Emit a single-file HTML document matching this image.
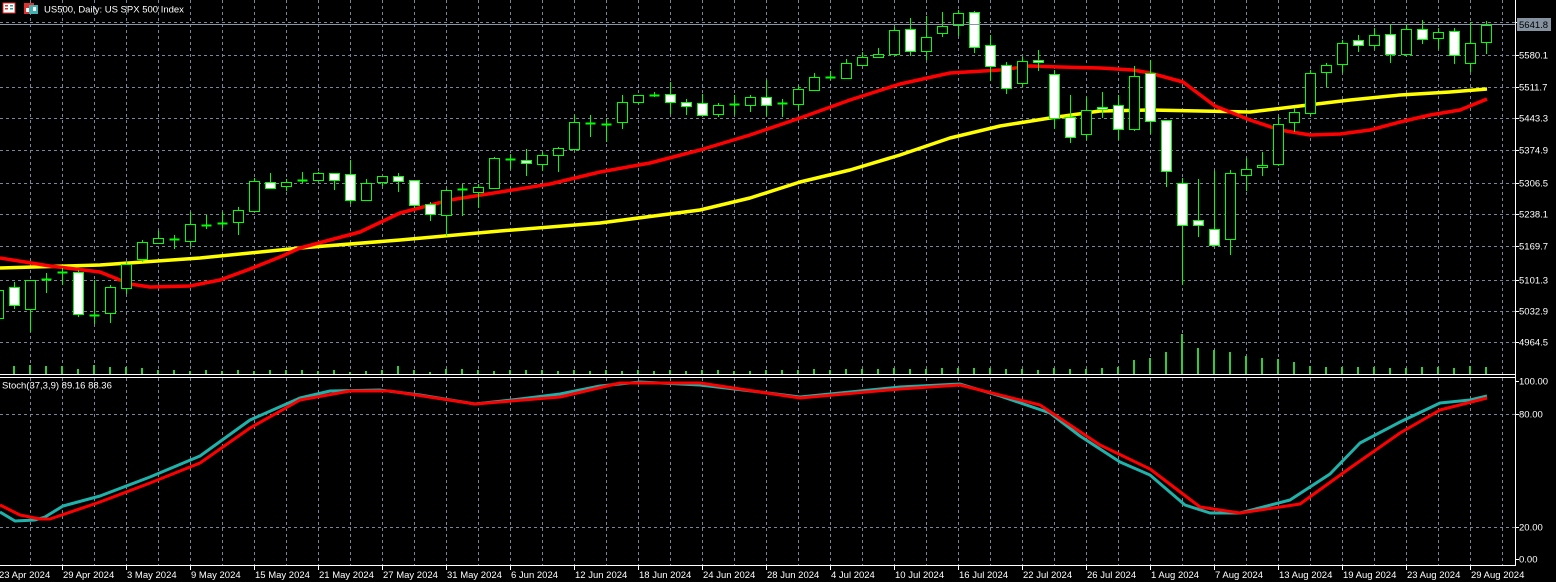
<!DOCTYPE html>
<html><head><meta charset="utf-8"><style>
html,body{margin:0;padding:0;background:#000;width:1556px;height:582px;overflow:hidden}
svg{display:block}
text{font-family:"Liberation Sans","DejaVu Sans",sans-serif;font-size:9.5px;fill:#fff}
</style></head><body>
<svg id="s" width="1556" height="582" viewBox="0 0 1556 582" xmlns="http://www.w3.org/2000/svg">
<rect width="1556" height="582" fill="#000"/>
<g id="grid"></g>
<g id="vol"></g>
<g id="ma"></g>
<g id="c"></g>
<g id="st"></g>
<!-- header -->
<rect x="3" y="3" width="12" height="10" fill="#fff" stroke="#e03030" stroke-width="1"/>
<rect x="5" y="5" width="3" height="1.5" fill="#e03030"/><rect x="5" y="8" width="3" height="1.5" fill="#e03030"/><rect x="10" y="5" width="3" height="1.5" fill="#30a0a0"/><rect x="10" y="8" width="3" height="1.5" fill="#30a0a0"/>
<rect x="24" y="3" width="10" height="11" fill="#e03030"/><rect x="29" y="5" width="9" height="9" fill="#40b0b0"/><rect x="26" y="8" width="3" height="4" fill="#fff"/><rect x="33" y="7" width="3" height="4" fill="#fff"/>
<text x="44" y="12.5" font-size="10">US500, Daily:  US SPX 500 Index</text>
<text x="2" y="388.5" font-size="9.5">Stoch(37,3,9) 89.16 88.36</text>
<!-- axes -->
<line x1="1515.5" y1="0" x2="1515.5" y2="566" stroke="#fff"/>
<line x1="0" y1="374.5" x2="1516" y2="374.5" stroke="#fff"/>
<line x1="0" y1="377.5" x2="1516" y2="377.5" stroke="#fff"/>
<line x1="0" y1="565.5" x2="1516" y2="565.5" stroke="#fff"/>
<line x1="0" y1="24.5" x2="1515" y2="24.5" stroke="#8a96a3"/>
<g id="ax"></g>
<rect x="1517" y="18" width="34" height="13" fill="#8592a0"/>
<text x="1519" y="28" style="fill:#000">5641.8</text>
<text x="1519" y="58.5">5580.1</text>
<text x="1519" y="90.5">5511.7</text>
<text x="1519" y="121.5">5443.3</text>
<text x="1519" y="153.5">5374.9</text>
<text x="1519" y="186.5">5306.5</text>
<text x="1519" y="217.5">5238.1</text>
<text x="1519" y="249.5">5169.7</text>
<text x="1519" y="283.5">5101.3</text>
<text x="1519" y="314.5">5032.9</text>
<text x="1519" y="345.5">4964.5</text>
<text x="1519" y="384.5">100.00</text>
<text x="1519" y="417.5">80.00</text>
<text x="1519" y="530.5">20.00</text>
<text x="1519" y="562.5">0.00</text>
<g>
<text x="-1" y="578">23 Apr 2024</text>
<text x="63" y="578">29 Apr 2024</text>
<text x="127" y="578">3 May 2024</text>
<text x="191" y="578">9 May 2024</text>
<text x="255" y="578">15 May 2024</text>
<text x="319" y="578">21 May 2024</text>
<text x="383" y="578">27 May 2024</text>
<text x="447" y="578">31 May 2024</text>
<text x="511" y="578">6 Jun 2024</text>
<text x="575" y="578">12 Jun 2024</text>
<text x="639" y="578">18 Jun 2024</text>
<text x="703" y="578">24 Jun 2024</text>
<text x="767" y="578">28 Jun 2024</text>
<text x="831" y="578">4 Jul 2024</text>
<text x="895" y="578">10 Jul 2024</text>
<text x="959" y="578">16 Jul 2024</text>
<text x="1023" y="578">22 Jul 2024</text>
<text x="1087" y="578">26 Jul 2024</text>
<text x="1151" y="578">1 Aug 2024</text>
<text x="1215" y="578">7 Aug 2024</text>
<text x="1279" y="578">13 Aug 2024</text>
<text x="1343" y="578">19 Aug 2024</text>
<text x="1407" y="578">23 Aug 2024</text>
<text x="1471" y="578">29 Aug 2024</text>
</g>
</svg>
<script>
var NS="http://www.w3.org/2000/svg";
function el(p,t,a){var e=document.createElementNS(NS,t);for(var k in a)e.setAttribute(k,a[k]);document.getElementById(p).appendChild(e);return e;}
var gc="#77879a";
[22,55,87,118,150,183,214,246,280,311,342,414,527].forEach(function(y){
 el("grid","line",{x1:0,y1:y+.5,x2:1515,y2:y+.5,stroke:gc,"stroke-dasharray":"3,3"});
 el("ax","line",{x1:1516,y1:y+.5,x2:1519,y2:y+.5,stroke:"#fff"});
});
el("ax","line",{x1:1516,y1:381.5,x2:1519,y2:381.5,stroke:"#fff"});
el("ax","line",{x1:1516,y1:559.5,x2:1519,y2:559.5,stroke:"#fff"});
for(var x=30;x<1515;x+=32){
 el("grid","line",{x1:x+.5,y1:0,x2:x+.5,y2:374,stroke:gc,"stroke-dasharray":"3,3"});
 el("grid","line",{x1:x+.5,y1:378,x2:x+.5,y2:565,stroke:gc,"stroke-dasharray":"3,3"});
}
for(var x=62;x<1515;x+=64){el("ax","line",{x1:x+.5,y1:566,x2:x+.5,y2:570,stroke:"#fff"});}
// candles: [wickTop, bodyTop, bodyBot, wickBot, filled]
var C=[[288,290,318,322,0],[282,287,305,309,1],[280,280,309,332,0],[273,279,279,293,0],[268,272,272,285,0],[270,272,314,317,1],[280,315,315,324,0],[285,287,313,323,0],[262,264,288,294,0],[240,242,259,262,0],
[231,238,243,243,0],[235,239,239,249,0],[212,224,241,247,0],[215,225,225,229,0],[212,223,223,228,0],[207,210,222,235,0],[178,181,211,212,0],[173,182,188,188,1],[179,182,186,191,0],[172,180,180,183,0],
[172,173,180,180,0],[173,173,180,190,1],[160,174,200,204,1],[179,183,200,201,0],[176,176,182,186,0],[173,176,181,192,1],[180,180,205,208,1],[202,204,214,221,1],[189,190,215,236,0],[184,189,189,216,0],
[184,187,192,208,0],[157,158,188,189,0],[154,159,159,169,0],[149,160,163,176,1],[152,155,164,171,0],[147,148,155,172,0],[115,122,149,151,0],[115,123,123,137,0],[119,124,124,142,0],[95,102,122,129,0],
[95,95,102,104,0],[92,95,95,97,0],[82,94,102,114,1],[99,102,106,115,1],[94,103,115,117,1],[103,105,114,117,0],[95,104,104,115,0],[95,97,105,112,0],[80,97,105,116,1],[99,103,103,117,0],
[86,89,104,110,0],[73,77,90,91,0],[71,77,77,80,0],[59,63,78,79,0],[52,57,65,65,0],[48,54,57,58,0],[27,30,54,55,0],[18,29,51,56,1],[16,37,51,60,0],[12,26,33,37,0],
[10,13,25,36,0],[11,12,47,53,1],[35,45,66,81,1],[62,65,88,94,1],[57,61,83,87,0],[50,60,62,71,1],[70,74,118,129,1],[95,117,137,143,1],[97,110,134,140,0],[92,107,109,118,1],
[95,105,129,140,1],[66,76,129,131,0],[60,73,121,134,1],[120,120,171,187,1],[178,183,225,285,1],[179,220,225,237,1],[171,229,245,247,1],[170,173,239,255,0],[158,169,175,191,0],[152,165,167,176,0],
[117,124,164,166,0],[108,112,122,132,0],[70,73,113,116,0],[63,65,72,87,0],[40,43,64,73,0],[35,40,45,52,1],[28,35,45,49,0],[24,34,54,63,1],[24,29,54,54,0],[20,29,39,44,1],
[28,32,38,49,0],[28,31,55,64,1],[22,43,63,72,0],[21,25,42,54,0]];
var vh=[8,8,9,8,8,5,9,7,7,6,4,4,3,4,3,4,3,4,4,4,3,4,2,3,4,8,4,2,5,5,4,3,4,4,4,3,4,3,4,3,4,3,4,3,4,4,3,3,4,4,4,5,4,5,5,5,6,5,5,6,6,6,6,5,5,4,6,5,5,6,7,14,16,22,40,26,24,22,18,16,15,12,8,7,7,7,7,6,6,7,7,6,8,7,7];
C.forEach(function(d,i){
 var cx=-2+16*i;
 el("vol","rect",{x:cx-1,y:376-vh[i]-2,width:2,height:vh[i],fill:"#32cd32"});
 el("c","line",{x1:cx+.5,y1:d[0],x2:cx+.5,y2:d[3],stroke:"#00ff00"});
 var h=d[2]-d[1];
 if(h<1){el("c","line",{x1:cx-4.5,y1:d[1]+.5,x2:cx+5.5,y2:d[1]+.5,stroke:"#00ff00","stroke-width":2});}
 else el("c","rect",{x:cx-4.5,y:d[1]+.5,width:10,height:h,fill:d[4]?"#fff":"#000",stroke:"#00ff00","stroke-width":1});
});
function pl(g,pts,col,w){el(g,"polyline",{points:pts.map(function(p){return p.join(",")}).join(" "),fill:"none",stroke:col,"stroke-width":w,"stroke-linejoin":"round"});}
pl("ma",[[0,268],[100,265],[200,258],[300,248],[400,240],[500,231],[600,223],[700,210],[750,198],[800,182],[850,170],[900,155],[950,138],[1000,126],[1050,118],[1100,111],[1150,110],[1200,111],[1250,112],[1300,106],[1350,100],[1400,95],[1450,92],[1487,89]],"#ffff00",3.5);
pl("ma",[[0,258],[50,266],[100,272],[130,284],[150,287],[190,286],[220,280],[250,269],[280,257],[300,248],[330,240],[360,232],[400,213],[450,200],[500,192],[550,184],[600,172],[650,163],[700,150],[750,135],[800,118],[850,100],[900,84],[950,73],[1000,70],[1030,66],[1060,67],[1100,68],[1133,70],[1150,73],[1183,82],[1215,106],[1250,120],[1280,130],[1310,135],[1340,134],[1370,130],[1400,122],[1430,115],[1460,110],[1487,99]],"#ff0000",3.5);
pl("st",[[0,512],[15,521],[35,520],[45,517],[63,506],[100,496],[150,477],[200,456],[250,420],[300,398],[330,391],[380,390],[420,395],[475,404],[520,399],[560,394],[600,386],[640,382],[700,385],[760,392],[800,397],[850,392],[900,387],[960,384],[1000,396],[1050,413],[1080,436],[1120,462],[1150,475],[1185,505],[1210,513],[1240,513],[1290,500],[1330,474],[1360,443],[1400,422],[1440,403],[1470,400],[1487,396]],"#20b2aa",3);
pl("st",[[0,505],[20,515],[40,519],[50,519],[100,502],[150,483],[200,463],[250,428],[300,400],[350,391],[390,391],[475,404],[560,397],[620,383],[700,383],[800,398],[900,389],[960,385],[1040,405],[1100,445],[1150,469],[1200,507],[1240,513],[1300,504],[1350,468],[1400,433],[1440,410],[1487,398]],"#ff0000",3);
</script>
</body></html>
